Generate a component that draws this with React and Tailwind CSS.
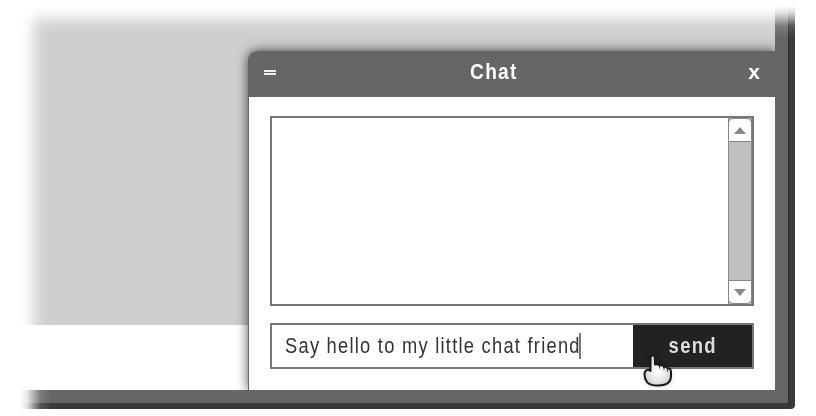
import React from "react";

function ScrollButton({ down }) {
  return (
    <div className={`flex h-[24px] w-[24px] shrink-0 items-center justify-center border border-[#888] bg-white ${down ? "rounded-b-[5px]" : "rounded-t-[5px]"}`}>
      <svg width="12" height="7" viewBox="0 0 12 7" className={down ? "rotate-180" : ""}>
        <path d="M6 0 12 7H0Z" fill="#888" />
      </svg>
    </div>
  );
}

function HandCursor() {
  return (
    <svg className="absolute left-[9px] top-[28px] drop-shadow-sm" width="34" height="36" viewBox="0 0 34 36">
      <defs>
        <radialGradient id="hand" cx="0.5" cy="0.55" r="0.6">
          <stop offset="0" stopColor="#fff" />
          <stop offset="0.5" stopColor="#e8e8e8" />
          <stop offset="1" stopColor="#c4c4c4" />
        </radialGradient>
      </defs>
      <path
        d="M8.500 18V4Q8.500 2.500 10.700 2.500T13 4.500V11.500Q16 10.500 17.500 12.500Q20.500 11.500 22 14Q24.500 13 25.500 15.500Q29 15 29 19V23Q29 27.500 26.500 29.500Q23 32.500 16 32.500Q7.500 32.500 5 29Q2.500 25.500 2.500 21.500Q2.500 17.500 5.500 17Q7.500 16.500 8.500 18Z"
        fill="url(#hand)"
        stroke="#181818"
        strokeWidth="2"
        strokeLinejoin="round"
      />
      <path d="M17.500 13V15.500M22 14.500V17M25.500 16.500V19" stroke="#444" strokeWidth="1" />
    </svg>
  );
}

export default function App() {
  return (
    <div className="h-[416px] w-[816px] overflow-hidden bg-white pl-[20px] pt-[6px] font-['Liberation_Sans',sans-serif]">
      <div className="h-[403px] w-[775px] rounded-br-[4px] border-b-[6px] border-r-[6px] border-[#3a3a3a] [mask-composite:intersect] [mask-image:linear-gradient(to_right,transparent_0px,rgba(0,0,0,.15)_7px,rgba(0,0,0,.85)_20px,black_31px),linear-gradient(to_bottom,transparent_0px,rgba(0,0,0,.2)_7px,rgba(0,0,0,.85)_20px,black_31px)]">
        <div className="h-[397px] w-[769px] border-b border-r border-[#2a2a2a]">
          <div className="h-[397px] w-[768px] border-b-[13px] border-r-[13px] border-[#666]">
            <div className="flex h-[384px] w-[755px] justify-end overflow-hidden bg-[linear-gradient(#cecece_319px,white_319px)] pt-[45px]">
              <section className="h-[339px] w-[527px] rounded-tl-[9px] border-l border-[#666] bg-white shadow-[0_0_12px_rgba(0,0,0,.7)]">
                <header className="flex h-[46px] items-center justify-between rounded-tl-[8px] bg-[#666] pl-[15px] pr-[15px] text-white">
                  <div className="flex w-[12px] flex-col gap-px pb-[4px]">
                    <i className="h-[2px] bg-[#eee]" />
                    <i className="h-[2px] bg-[#eee]" />
                  </div>
                  <h1 className="w-[47px] origin-left -translate-x-[19px] scale-x-[.87] whitespace-nowrap pb-[4px] text-[22px] font-bold leading-[30px] tracking-[1.500px]">Chat</h1>
                  <span className="pb-[5px] text-[21px] font-bold leading-[30px]">x</span>
                </header>
                <div className="flex flex-col pl-[21px] pt-[19px]">
                  <div className="flex h-[190px] w-[484px] justify-end border-2 border-[#777]">
                    <div className="flex w-[24px] flex-col justify-between border-x border-[#888] bg-[#c0c0c0]">
                      <div className="-mx-px"><ScrollButton /></div>
                      <div className="-mx-px"><ScrollButton down /></div>
                    </div>
                  </div>
                  <div className="mt-[17px] flex h-[46px] w-[484px] border-2 border-[#777]">
                    <div className="flex w-[361px] shrink-0 items-center pl-[13px] text-[22px] text-[#333]">
                      <div className="w-[294px] pb-[2px]">
                        <span className="inline-block origin-left scale-x-[.832] whitespace-nowrap tracking-[1.500px]">Say hello to my little chat friend</span>
                      </div>
                      <i className="h-[26px] w-[2px] bg-[#777]" />
                    </div>
                    <div className="relative flex flex-1 items-center justify-center bg-[#222] text-[22px] font-bold tracking-[1.500px] text-[#ddd]">
                      <span className="scale-x-[.84] pb-[2px]">send</span>
                      <HandCursor />
                    </div>
                  </div>
                </div>
              </section>
            </div>
          </div>
        </div>
      </div>
    </div>
  );
}
